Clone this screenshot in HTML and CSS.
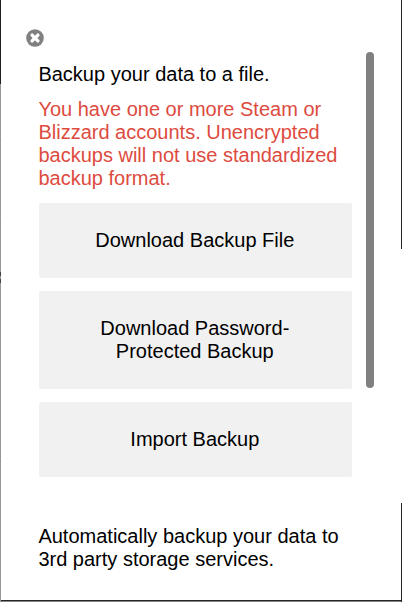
FILE: index.html
```html
<!DOCTYPE html>
<html lang="en">
<head>
<meta charset="utf-8">
<title>Backup</title>
<link rel="stylesheet" href="styles.css">
</head>
<body>
<div class="popup">
  <main class="content">
    <svg class="close" viewBox="0 0 18 18" role="img"><circle cx="9" cy="9" r="8.8"/><path d="M6.1 6.1l5.8 5.8M11.9 6.1l-5.8 5.8"/></svg>
    <p class="text">Backup your data to a file.</p>
    <p class="text warning">You have one or more Steam or Blizzard accounts. Unencrypted backups will not use standardized backup format.</p>
    <button class="button">Download Backup File</button>
    <button class="button">Download Password-<br>Protected Backup</button>
    <button class="button">Import Backup</button>
    <p class="text storage">Automatically backup your data to 3rd party storage services.</p>
  </main>
  <div class="scrollbar"></div>
</div>
</body>
</html>
```
FILE: styles.css
```css
* { box-sizing: border-box; }
body {
  margin: 0;
  width: 402px;
  height: 602px;
  overflow: hidden;
  background: #fff;
  color: #000;
  font: 20px/23px "Liberation Sans", Arial, sans-serif;
}
.popup {
  position: relative;
  display: flex;
  height: 602px;
  background:
    linear-gradient(#1f2026 0 84px, #98989a 84px 106px, #88888a 106px 107px, #98989a 107px 140px, #88888a 140px 141px, #98989a 141px 222px, #88888a 222px 223px, #98989a 223px 272px, #414149 272px 276px, #98989a 276px 279px, #414149 279px 283px, #98989a 283px 461px, #858587 461px 462px, #98989a 462px) 0 0 / 1px 100% no-repeat,
    linear-gradient(#252525 0 249px, #fff 249px 503px, #252525 503px) 100% 0 / 1px 100% no-repeat,
    linear-gradient(#252525 0 1px, #858585 1px 2px) 0 100% / 100% 2px no-repeat,
    #fff;
}
.content {
  width: 352px;
  padding: 29px 0 0 39px;
}
.close {
  display: block;
  width: 18px;
  height: 18px;
  margin-left: -13px;
}
.close circle { fill: gray; }
.close path { stroke: #fff; stroke-width: 3.4; stroke-linecap: round; }
.text { margin: 16px 0 12px -0.6px; }
.warning { margin-bottom: 13px; margin-top: 12px; color: #dd4b40; }
.button {
  display: block;
  width: 313px;
  margin: 0 0 13px;
  padding: 26px 1.4px 26px 0;
  border: 0;
  border-radius: 2px;
  background: #f1f1f1;
  color: #000;
  font: inherit;
  text-align: center;
}
.storage { margin-top: 48px; margin-bottom: 0; }
.scrollbar {
  width: 8px;
  height: 336px;
  margin: 52px 0 0 14px;
  border-radius: 4px;
  background: gray;
}
```
